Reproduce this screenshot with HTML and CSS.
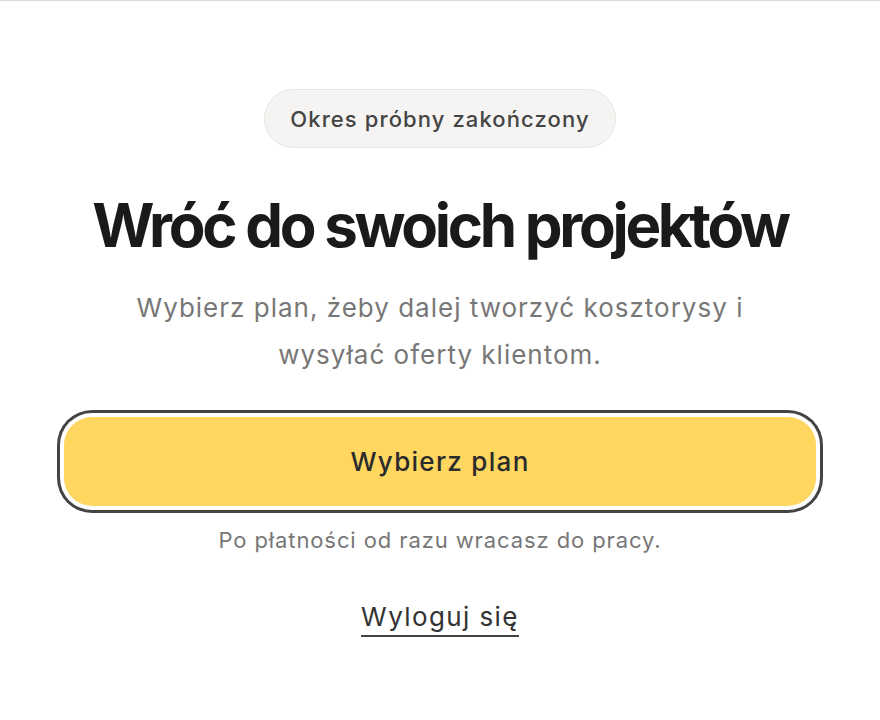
FILE: index.html
```html
<!DOCTYPE html>
<html lang="pl">
<head>
<meta charset="utf-8">
<link rel="stylesheet" href="styles.css">
</head>
<body>
<main class="page">
  <div class="badge">Okres próbny zakończony</div>
  <h1 class="title">Wróć do swoich projektów</h1>
  <p class="lead">Wybierz plan, żeby dalej tworzyć kosztorysy i wysyłać oferty klientom.</p>
  <button class="cta" type="button">Wybierz plan</button>
  <p class="note">Po płatności od razu wracasz do pracy.</p>
  <a class="logout" href="#">Wyloguj się</a>
</main>
</body>
</html>
```
FILE: styles.css
```css
html, body {
  margin: 0;
  padding: 0;
  background: #ffffff;
}
body {
  font-family: "Inter", "Noto Sans", sans-serif;
  border-top: 1px solid #d9d9d9;
}
.page {
  display: flex;
  flex-direction: column;
  align-items: center;
  padding: 88px 64px 0;
}
.badge {
  box-sizing: border-box;
  height: 59px;
  padding: 0 25px;
  display: flex;
  align-items: center;
  border: 1px solid #e6e5e2;
  border-radius: 999px;
  background: #f5f4f2;
  color: #444444;
  font-size: 22px;
  font-weight: 500;
  letter-spacing: 1.1px;
}
.title {
  margin: 39px 0 0;
  font-size: 60px;
  line-height: 76px;
  font-weight: 650;
  letter-spacing: -3.3px;
  color: #1a1a1a;
  white-space: nowrap;
}
.lead {
  margin: 21px 0 0;
  max-width: 660px;
  text-align: center;
  font-size: 26px;
  line-height: 47px;
  color: #777777;
  letter-spacing: 1px;
}
.cta {
  margin-top: 39px;
  width: 752px;
  height: 89px;
  border: none;
  border-radius: 28px;
  background: #fed660;
  color: #2b2b2b;
  font-family: inherit;
  font-size: 26px;
  font-weight: 500;
  letter-spacing: 1.3px;
  box-shadow: 0 0 0 4px #ffffff, 0 0 0 7px #444444;
}
.note {
  margin: 20px 0 0;
  font-size: 22px;
  line-height: 28px;
  color: #777777;
  letter-spacing: 0.9px;
}
.logout {
  margin-top: 48px;
  padding-bottom: 3px;
  font-size: 26px;
  line-height: 30px;
  color: #333333;
  text-decoration: none;
  border-bottom: 2px solid #444444;
  letter-spacing: 1.4px;
}
```
